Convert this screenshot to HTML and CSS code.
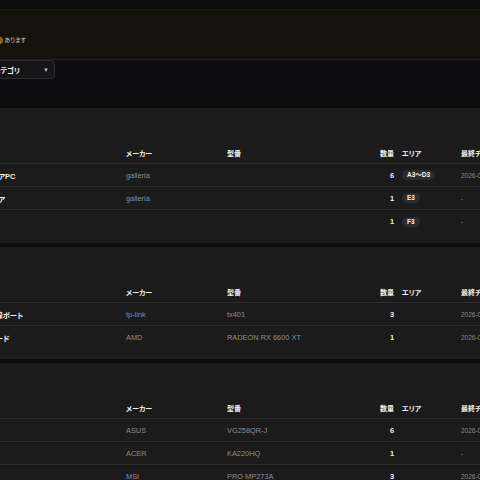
FILE: index.html
```html
<!DOCTYPE html>
<html lang="ja">
<head>
    <meta charset="UTF-8">
    <meta name="viewport" content="width=device-width, initial-scale=1.0">
    <title>備品一覧</title>
    <link rel="stylesheet" href="styles.css">
</head>
<body>
    <div class="page">

        <!-- Alert -->
        <div class="alert">
            <p class="alert-title">注意</p>
            <p class="alert-text">点検 <span class="count">3</span> あります</p>
        </div>

        <!-- Filter -->
        <div class="filter">
            <div class="select">
                <span>カテゴリ</span>
                <span class="arrow">▼</span>
            </div>
        </div>

        <!-- PC -->
        <section class="card">
            <div class="card-head"><h2>PC</h2></div>
            <table>
                <colgroup>
                    <col class="c-name"><col class="c-maker"><col class="c-model"><col class="c-qty"><col class="c-area"><col class="c-date">
                </colgroup>
                <thead>
                    <tr><th>名称</th><th>メーカー</th><th>型番</th><th class="qty">数量</th><th>エリア</th><th>最終チェック</th></tr>
                </thead>
                <tbody>
                    <tr><td class="name">ガレリアPC</td><td>galleria</td><td></td><td class="qty">6</td><td><span class="badge">A3〜D3</span></td><td class="date">2026-01-15</td></tr>
                    <tr><td class="name">ガレリア</td><td>galleria</td><td></td><td class="qty">1</td><td><span class="badge">E3</span></td><td class="date">-</td></tr>
                    <tr><td class="name">予備</td><td></td><td></td><td class="qty">1</td><td><span class="badge">F3</span></td><td class="date">-</td></tr>
                </tbody>
            </table>
        </section>

        <!-- Parts -->
        <section class="card">
            <div class="card-head"><h2>部品</h2></div>
            <table>
                <colgroup>
                    <col class="c-name"><col class="c-maker"><col class="c-model"><col class="c-qty"><col class="c-area"><col class="c-date">
                </colgroup>
                <thead>
                    <tr><th>名称</th><th>メーカー</th><th>型番</th><th class="qty">数量</th><th>エリア</th><th>最終チェック</th></tr>
                </thead>
                <tbody>
                    <tr><td class="name">1G有線ポート</td><td>tp-link</td><td>tx401</td><td class="qty">3</td><td></td><td class="date">2026-01-20</td></tr>
                    <tr><td class="name">GPボード</td><td>AMD</td><td>RADEON RX 6600 XT</td><td class="qty">1</td><td></td><td class="date">2026-01-20</td></tr>
                </tbody>
            </table>
        </section>

        <!-- Monitors -->
        <section class="card">
            <div class="card-head"><h2>液晶</h2></div>
            <table>
                <colgroup>
                    <col class="c-name"><col class="c-maker"><col class="c-model"><col class="c-qty"><col class="c-area"><col class="c-date">
                </colgroup>
                <thead>
                    <tr><th>名称</th><th>メーカー</th><th>型番</th><th class="qty">数量</th><th>エリア</th><th>最終チェック</th></tr>
                </thead>
                <tbody>
                    <tr><td class="name">A席</td><td>ASUS</td><td>VG258QR-J</td><td class="qty">6</td><td></td><td class="date">2026-01-18</td></tr>
                    <tr><td class="name">B席</td><td>ACER</td><td>KA220HQ</td><td class="qty">1</td><td></td><td class="date">-</td></tr>
                    <tr><td class="name">予備</td><td>MSI</td><td>PRO MP273A</td><td class="qty">3</td><td></td><td class="date">2026-01-18</td></tr>
                </tbody>
            </table>
        </section>

    </div>
</body>
</html>
```

FILE: styles.css
```css
body {
    margin: 0;
    background-color: #0d0d0f;
    font-family: "Liberation Sans", "Noto Sans CJK JP", sans-serif;
    font-feature-settings: "palt";
    color: #e8e8e8;
    overflow: hidden;
}
.page {
    margin-left: -40px;
    width: 620px;
    padding-top: 9px;
}

/* Alert banner */
.alert {
    height: 51px;
    box-sizing: border-box;
    background-color: #15120b;
    border-top: 1px solid #1f1b10;
    border-bottom: 1px solid #27220f;
    padding: 13px 14px 0;
}
.alert p {
    margin: 0;
}
.alert-title {
    font-size: 8px;
    line-height: 12px;
    font-weight: bold;
    color: #d9b43a;
}
.alert-text {
    font-size: 6px;
    line-height: 10px;
    color: #c4c4c4;
    padding-left: 8px;
}
.count {
    display: inline-block;
    width: 7px;
    height: 7px;
    line-height: 6px;
    border-radius: 50%;
    background-color: #5e4b16;
    border: 1px solid #b8921f;
    color: #f1d27a;
    font-size: 5px;
    text-align: center;
    vertical-align: middle;
    box-sizing: border-box;
}

/* Filter */
.filter {
    padding-left: 20px;
}
.select {
    width: 75px;
    height: 19px;
    box-sizing: border-box;
    display: flex;
    align-items: center;
    justify-content: space-between;
    padding: 0 5px 0 13px;
    background-color: #151517;
    border: 1px solid #2b2b2e;
    border-radius: 4px;
    font-size: 7px;
    font-weight: bold;
    color: #f2f2f2;
}
.select .arrow {
    font-size: 6px;
    color: #b9b9b9;
}

/* Category cards */
.card {
    background-color: #1b1b1b;
    padding: 0 14px 10px;
    margin-top: 4px;
}
.filter + .card {
    margin-top: 29px;
}
.card-head {
    height: 34px;
}
.card-head h2 {
    margin: 0;
    padding-top: 10px;
    font-size: 8px;
    color: #f0f0f0;
}
table {
    table-layout: fixed;
    width: 573px;
    border-collapse: separate;
    border-spacing: 0;
}
.c-name { width: 148px; }
.c-maker { width: 101px; }
.c-model { width: 135px; }
.c-qty { width: 40px; }
.c-area { width: 59px; }
.c-date { width: 90px; }

th, td {
    padding: 0 4px;
    text-align: left;
    white-space: nowrap;
    overflow: hidden;
}
th {
    height: 21px;
    border-bottom: 1px solid #2e2e2e;
    font-size: 7px;
    font-weight: bold;
    color: #f0f0f0;
}
td {
    height: 22px;
    border-bottom: 1px solid #2a2a2a;
    font-size: 7.4px;
    color: #8e8e8e;
}
tbody tr:last-child td {
    border-bottom: none;
    height: 23px;
}
td.name {
    font-weight: bold;
    color: #f0f0f0;
}
.qty {
    text-align: right;
}
td.qty {
    font-weight: bold;
    color: #f0f0f0;
}
td.date {
    font-size: 6.5px;
    color: #8a8a8a;
}
.badge {
    display: inline-block;
    height: 10px;
    line-height: 10px;
    padding: 0 5px;
    border-radius: 5px;
    background-color: #2c2c2c;
    font-size: 6.5px;
    font-weight: bold;
    color: #f2f2f2;
}
```
